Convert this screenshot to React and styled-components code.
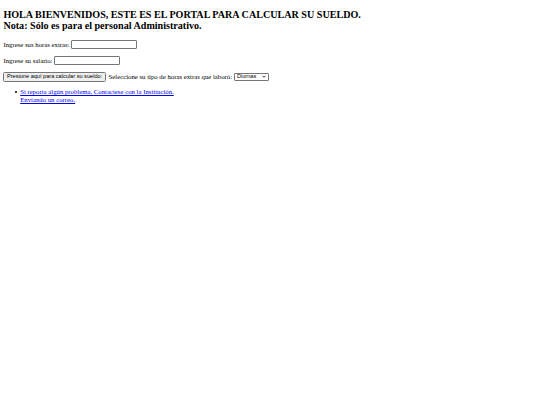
import React, { useState } from "react";
import styled, { createGlobalStyle } from "styled-components";

const GlobalStyle = createGlobalStyle`
  body {
    margin: 3.4px;
    background: #ffffff;
    font-family: "Liberation Serif", "Times New Roman", serif;
    font-size: 6.75px;
    color: #000000;
  }
`;

const Heading = styled.h2`
  font-size: 10.1px;
  font-weight: bold;
  margin: 5.4px 0 9px 0;
  line-height: 11.2px;
`;

const FieldRow = styled.p`
  margin: 6.7px 0;
  display: flex;
  align-items: center;
  gap: 1.8px;
  height: 9.3px;
`;

const TextInput = styled.input`
  box-sizing: border-box;
  width: 66px;
  height: 9px;
  padding: 0 1px;
  border: 1px solid #767676;
  border-radius: 1px;
  font-size: 5.6px;
  background: #ffffff;
`;

const CalcButton = styled.button`
  box-sizing: border-box;
  font-family: "Liberation Sans", Arial, sans-serif;
  font-size: 5.6px;
  height: 9.5px;
  padding: 0 3px;
  margin: 0 0.6px 0 -0.4px;
  border: 1px solid #767676;
  border-radius: 1.5px;
  background: #efefef;
  color: #000000;
  line-height: 1;
`;

const SelectWrap = styled.span`
  position: relative;
  display: inline-flex;
  margin-left: 0.6px;
`;

const TypeSelect = styled.select`
  box-sizing: border-box;
  appearance: none;
  font-family: "Liberation Sans", Arial, sans-serif;
  font-size: 5.6px;
  height: 8.5px;
  width: 35px;
  padding: 0 0 0 1.5px;
  border: 1px solid #767676;
  border-radius: 1px;
  background: #ffffff;
  color: #000000;
  line-height: 1;
`;

const Chevron = styled.svg`
  position: absolute;
  right: 3px;
  top: 2.8px;
  width: 4px;
  height: 3px;
  pointer-events: none;
`;

const LinkList = styled.ul`
  margin: 5px 0;
  padding-left: 16.8px;
  line-height: 7.8px;
  list-style: none;
`;

const LinkItem = styled.li`
  position: relative;
  &::before {
    content: "";
    position: absolute;
    left: -5.5px;
    top: 3px;
    width: 2px;
    height: 2px;
    border-radius: 50%;
    background: #000000;
  }
`;

const MailLink = styled.a`
  color: #0000ee;
`;

const App = () => {
  const [horas, setHoras] = useState("");
  const [salario, setSalario] = useState("");

  return (
    <>
      <GlobalStyle />
      <Heading>
        HOLA BIENVENIDOS, ESTE ES EL PORTAL PARA CALCULAR SU SUELDO.
        <br />
        Nota: Sólo es para el personal Administrativo.
      </Heading>
      <FieldRow>
        Ingrese sus horas extras:
        <TextInput value={horas} onChange={(e) => setHoras(e.target.value)} />
      </FieldRow>
      <FieldRow>
        Ingrese su salario:
        <TextInput
          value={salario}
          onChange={(e) => setSalario(e.target.value)}
        />
      </FieldRow>
      <FieldRow>
        <CalcButton>Presione aquí para calcular su sueldo:</CalcButton>
        Seleccione su tipo de horas extras que laboró:
        <SelectWrap>
          <TypeSelect defaultValue="diurnas">
            <option value="diurnas">Diurnas</option>
            <option value="nocturnas">Nocturnas</option>
          </TypeSelect>
          <Chevron viewBox="0 0 8 6">
            <path d="M1 1.5 L4 4.5 L7 1.5" fill="none" stroke="#000" strokeWidth="1.6" />
          </Chevron>
        </SelectWrap>
      </FieldRow>
      <LinkList>
        <LinkItem>
          <MailLink href="#">
            Si reporta algún problema, Contactese con la Institución.
            <br />
            Enviando un correo.
          </MailLink>
        </LinkItem>
      </LinkList>
    </>
  );
};

export default App;
